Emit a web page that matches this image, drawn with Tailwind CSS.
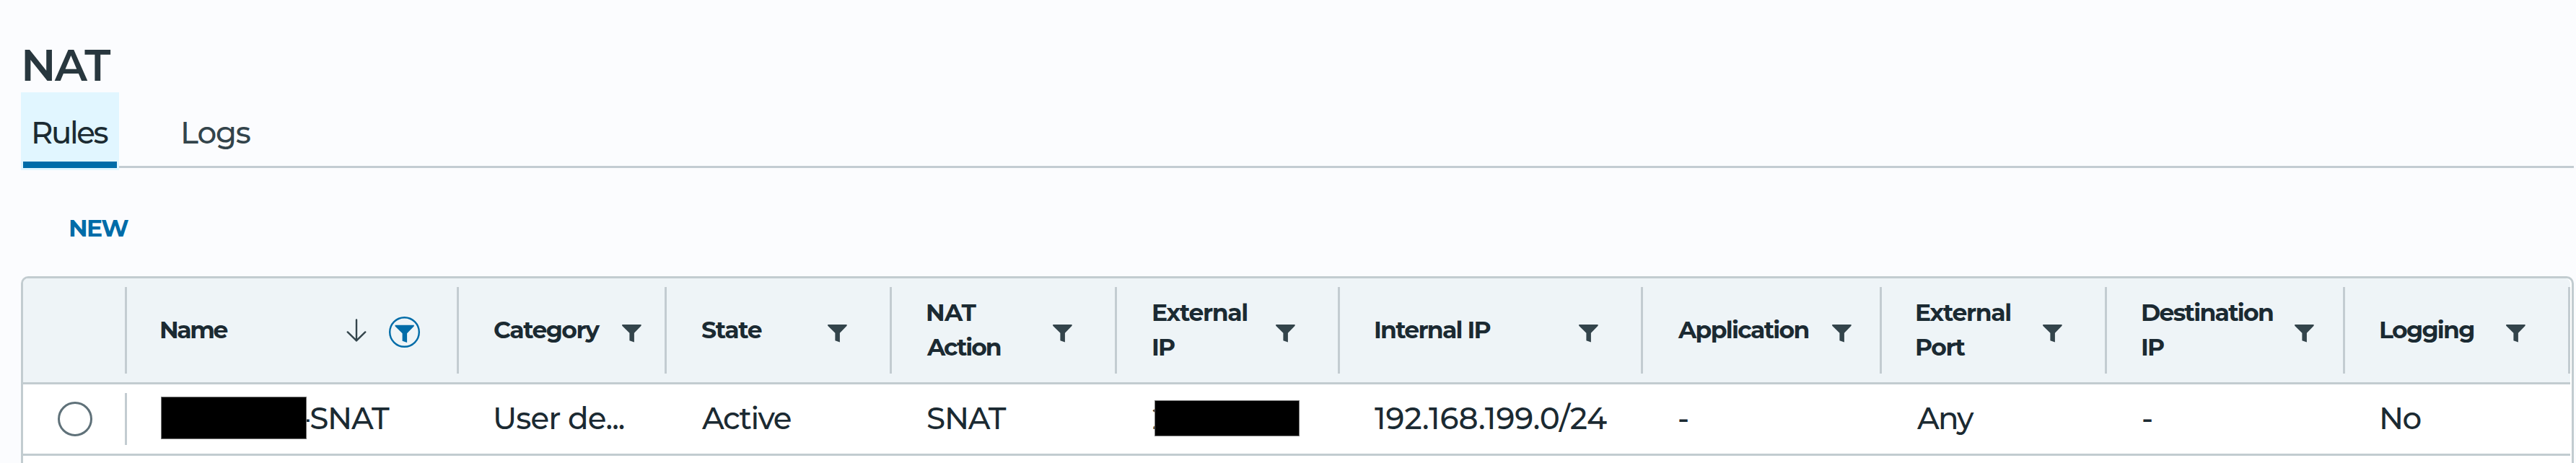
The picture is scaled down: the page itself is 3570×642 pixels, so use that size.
<!DOCTYPE html>
<html lang="en">
<head>
<meta charset="utf-8">
<title>NAT</title>
<script src="https://cdn.jsdelivr.net/npm/@tailwindcss/browser@4"></script>
</head>
<body class="h-[642px] overflow-hidden bg-[#fbfcfe] pl-[29px] pr-[3px] font-[Montserrat,Inter,sans-serif] text-[#1b2a32]">
<svg class="hidden">
  <symbol id="funnel" viewBox="0 0 27 25"><path fill="currentColor" d="M0.2 0H26.6V1.8L16.9 11.8V24.6L10.4 22.3V11.8L0.2 1.8Z"/></symbol>
</svg>

<h1 class="h-32 pt-[54px] text-[60px] leading-[74px] font-semibold tracking-[-1.6px] text-[#28373e]">NAT</h1>

<nav class="flex h-[108px] text-[42px] font-medium">
  <div class="flex h-[108px] w-[136px] flex-col bg-[#e1f6ff] px-[3px] text-[#1b2b32]">
    <div class="h-24 pt-4 pl-[11px] leading-[80px] tracking-[-2.5px]">Rules</div>
    <div class="h-[9px] bg-[#006ca8]"></div>
  </div>
  <div class="h-[105px] flex-1 border-b-[3px] border-[#c3ccd2] pt-4 pl-[85px] leading-[80px] tracking-[-1.2px] text-[#33444b]">Logs</div>
</nav>

<div class="h-[147px] pt-14 pl-[66px] text-[33px] leading-[48px] font-bold tracking-[-1.6px] text-[#006ca8]">NEW</div>

<main class="h-[259px] rounded-t-[10px] border-[3px] border-b-0 border-[#c2ccd0] bg-white pr-[2px]">
  <div class="grid h-[147px] grid-cols-[144px_460px_288px_312px_312px_309px_420px_331px_312px_330px_312px] rounded-tl-[7px] rounded-tr-[7px] border-b-[3px] border-[#c2ccd0] bg-[#eef4f7] text-[33px] leading-[48px] font-bold tracking-[-1.7px]">
    <div class="flex justify-end py-3"><i class="w-[3px] bg-[#c3ccd1]"></i></div>
    <div class="flex py-3 pl-[45px]">
      <div class="flex flex-1 items-center pb-0.5 tracking-[-2.4px]">Name</div>
      <div class="flex items-center gap-[31px] pr-[51px] pb-0.5">
        <svg class="mt-0.5 h-8 w-7 text-[#33444b]" viewBox="0 0 28 32" fill="none" stroke="currentColor" stroke-width="2.4" stroke-linecap="round" stroke-linejoin="round"><path d="M14 1.4V30.4M1.8 18.4L14 30.4L26.2 18.4"/></svg>
        <svg class="mt-1.5 size-[43px] text-[#006ca8]" viewBox="0 0 43 43"><circle cx="21.5" cy="21.5" r="20.3" fill="none" stroke="currentColor" stroke-width="2.4"/><use href="#funnel" x="8.2" y="11.5" width="27" height="25"/></svg>
      </div>
      <i class="w-[3px] bg-[#c3ccd1]"></i>
    </div>
    <div class="flex py-3 pl-12">
      <div class="flex flex-1 items-center pb-0.5 tracking-[-1.5px]">Category</div>
      <div class="flex items-center pr-8 pb-0.5"><svg class="mt-[11px] h-[25px] w-[27px] text-[#33444b]"><use href="#funnel"/></svg></div>
      <i class="w-[3px] bg-[#c3ccd1]"></i>
    </div>
    <div class="flex py-3 pl-12">
      <div class="flex flex-1 items-center pb-0.5 tracking-[-1.3px]">State</div>
      <div class="flex items-center pr-[59px] pb-0.5"><svg class="mt-[11px] h-[25px] w-[27px] text-[#33444b]"><use href="#funnel"/></svg></div>
      <i class="w-[3px] bg-[#c3ccd1]"></i>
    </div>
    <div class="flex py-3 pl-[47px]">
      <div class="flex flex-1 flex-col justify-center pb-0.5"><span class="tracking-[-0.6px]">NAT</span><span class="pl-0.5 tracking-[-2px]">Action</span></div>
      <div class="flex items-center pr-[59px] pb-0.5"><svg class="mt-[11px] h-[25px] w-[27px] text-[#33444b]"><use href="#funnel"/></svg></div>
      <i class="w-[3px] bg-[#c3ccd1]"></i>
    </div>
    <div class="flex py-3 pl-[48px]">
      <div class="flex flex-1 flex-col justify-center pb-0.5"><span class="tracking-[-1.3px]">External</span><span>IP</span></div>
      <div class="flex items-center pr-[59px] pb-0.5"><svg class="mt-[11px] h-[25px] w-[27px] text-[#33444b]"><use href="#funnel"/></svg></div>
      <i class="w-[3px] bg-[#c3ccd1]"></i>
    </div>
    <div class="flex py-3 pl-[47px]">
      <div class="flex flex-1 items-center pb-0.5">Internal IP</div>
      <div class="flex items-center pr-[59px] pb-0.5"><svg class="mt-[11px] h-[25px] w-[27px] text-[#33444b]"><use href="#funnel"/></svg></div>
      <i class="w-[3px] bg-[#c3ccd1]"></i>
    </div>
    <div class="flex py-3 pl-[49px]">
      <div class="flex flex-1 items-center pb-0.5">Application</div>
      <div class="flex items-center pr-[39px] pb-0.5"><svg class="mt-[11px] h-[25px] w-[27px] text-[#33444b]"><use href="#funnel"/></svg></div>
      <i class="w-[3px] bg-[#c3ccd1]"></i>
    </div>
    <div class="flex py-3 pl-[46px]">
      <div class="flex flex-1 flex-col justify-center pb-0.5"><span class="tracking-[-1.3px]">External</span><span class="tracking-[-1.5px]">Port</span></div>
      <div class="flex items-center pr-[59px] pb-0.5"><svg class="mt-[11px] h-[25px] w-[27px] text-[#33444b]"><use href="#funnel"/></svg></div>
      <i class="w-[3px] bg-[#c3ccd1]"></i>
    </div>
    <div class="flex py-3 pl-[47px]">
      <div class="flex flex-1 flex-col justify-center pb-0.5"><span>Destination</span><span>IP</span></div>
      <div class="flex items-center pr-10 pb-0.5"><svg class="mt-[11px] h-[25px] w-[27px] text-[#33444b]"><use href="#funnel"/></svg></div>
      <i class="w-[3px] bg-[#c3ccd1]"></i>
    </div>
    <div class="flex py-3 pl-[47px]">
      <div class="flex flex-1 items-center pb-0.5">Logging</div>
      <div class="flex items-center pr-[59px] pb-0.5"><svg class="mt-[11px] h-[25px] w-[27px] text-[#33444b]"><use href="#funnel"/></svg></div>
      <i class="w-[3px] bg-[#c3ccd1]"></i>
    </div>
  </div>

  <div class="grid h-[99px] grid-cols-[144px_460px_288px_312px_312px_309px_420px_331px_312px_330px_312px] border-b-[3px] border-[#c2ccd0] text-[42px] leading-[94px] font-medium whitespace-nowrap">
    <div class="flex items-center justify-between pl-12"><span class="size-12 rounded-full border-[3px] border-[#5f7179]"></span><i class="h-[72px] w-[3px] bg-[#c3ccd1]"></i></div>
    <div class="flex items-start pl-[47px]"><span class="z-10 mt-[17px] h-[59px] w-[202px] border border-[#777] bg-black"></span><span class="-ml-[10px] tracking-[-1.2px]">-SNAT</span></div>
    <div class="pl-[47px] tracking-[-0.9px]">User de...</div>
    <div class="pl-[49px] tracking-[-1.6px]">Active</div>
    <div class="pl-12 tracking-[-1.2px]">SNAT</div>
    <div class="flex items-start pl-[49px]"><span class="w-[3px]">2</span><span class="z-10 mt-[22px] h-[50px] w-[201px] border border-[#777] bg-black"></span></div>
    <div class="pl-[48px] tracking-[0px]">192.168.199.0/24</div>
    <div class="pl-12">-</div>
    <div class="pl-[49px] tracking-[-1.8px]">Any</div>
    <div class="pl-12">-</div>
    <div class="pl-[47px] tracking-[-1.6px]">No</div>
  </div>
</main>
</body>
</html>
